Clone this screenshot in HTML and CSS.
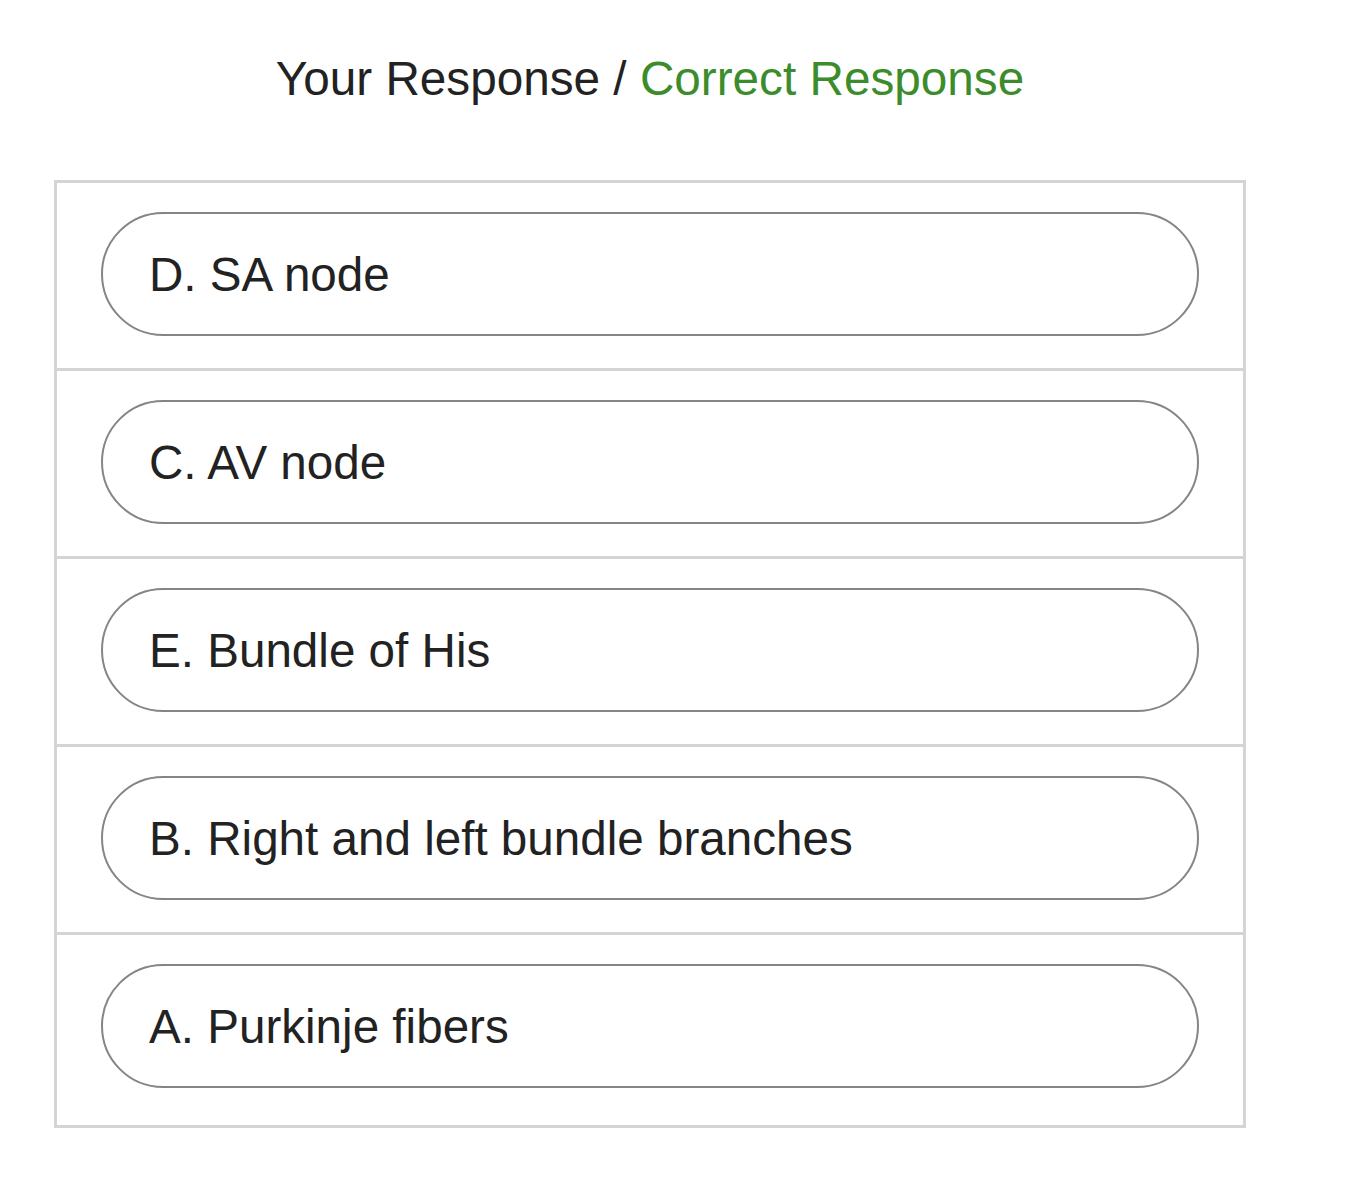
FILE: index.html
```html
<html>
<head>
	<meta charset="utf-8">
	<meta name="viewport" content="width=device-width, initial-scale=1">
	<title>Response</title>
	<link rel="stylesheet" href="styles.css">
</head>
<body>

	<main class="result">
		<h2 class="legend">Your Response / <span class="correct">Correct Response</span></h2>
		<ul class="answers">
			<li><div class="pill">D. SA node</div></li>
			<li><div class="pill">C. AV node</div></li>
			<li><div class="pill">E. Bundle of His</div></li>
			<li><div class="pill">B. Right and left bundle branches</div></li>
			<li><div class="pill">A. Purkinje fibers</div></li>
		</ul>
	</main>

</body>
</html>
```

FILE: styles.css
```css
*{
	box-sizing: border-box;
	padding: 0;
	margin: 0;
}
body
{
	background:#fff;
	font-family: "Liberation Sans", Arial, sans-serif;
	color:#222;
}
.result
{
	width:1192px;
	margin-left:54px;
	padding-top:50px;
}
.legend
{
	font-weight:normal;
	font-size:47.7px;
	line-height:58px;
	text-align:center;
	color:#222;
	margin-bottom:72px;
}
.legend .correct
{
	color:#3c8c2c;
}
.answers
{
	list-style:none;
	border:3px solid #d4d4d4;
	border-top:0;
}
.answers li
{
	border-top:3px solid #d4d4d4;
	padding:29px 44px 32px 44px;
}
.answers li:last-child
{
	padding-bottom:37px;
}
.pill
{
	height:124px;
	border:2px solid #858585;
	border-radius:62px;
	padding-left:46px;
	display:flex;
	align-items:center;
	font-size:47.6px;
	color:#222;
}
```
